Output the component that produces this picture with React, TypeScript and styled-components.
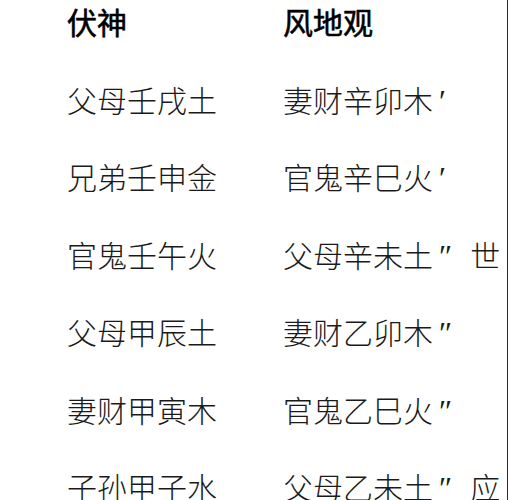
import React from "react";
import styled, { createGlobalStyle } from "styled-components";

const Global = createGlobalStyle`
  html, body { margin: 0; padding: 0; background: #fff; }
  body { font-family: "Noto Sans CJK SC", "Noto Sans", sans-serif; }
`;

const Page = styled.div`
  box-sizing: border-box;
  width: 508px;
  height: 500px;
  overflow: hidden;
  border-right: 1px solid #2a2a2a;
  padding: 6px 0 0 67px;
`;

const Table = styled.div`
  display: grid;
  grid-template-columns: 216px auto;
  grid-auto-rows: 30px;
  row-gap: 47.5px;
`;

const Cell = styled.div<{ $head?: boolean }>`
  font-size: 30px;
  line-height: 30px;
  white-space: nowrap;
  color: ${(p) => (p.$head ? "#000" : "#1a1a1a")};
  font-weight: ${(p) => (p.$head ? 400 : 300)};
  -webkit-text-stroke: ${(p) => (p.$head ? "0.6px #000" : "0")};
`;

const Mark = styled.span`
  font-family: "Liberation Serif", serif;
  font-size: 1.05em;
  margin-left: 6px;
`;

const Role = styled.span`
  margin-left: 18px;
`;

type Row = { left: string; right: string; mark: string; role?: string };

const rows: Row[] = [
  { left: "父母壬戌土", right: "妻财辛卯木", mark: "′" },
  { left: "兄弟壬申金", right: "官鬼辛巳火", mark: "′" },
  { left: "官鬼壬午火", right: "父母辛未土", mark: "″", role: "世" },
  { left: "父母甲辰土", right: "妻财乙卯木", mark: "″" },
  { left: "妻财甲寅木", right: "官鬼乙巳火", mark: "″" },
  { left: "子孙甲子水", right: "父母乙未土", mark: "″", role: "应" },
];

export default function App() {
  return (
    <>
      <Global />
      <Page>
        <Table>
          <Cell $head>伏神</Cell>
          <Cell $head>风地观</Cell>
          {rows.map((r) => (
            <React.Fragment key={r.left}>
              <Cell>{r.left}</Cell>
              <Cell>
                {r.right}
                <Mark>{r.mark}</Mark>
                {r.role && <Role>{r.role}</Role>}
              </Cell>
            </React.Fragment>
          ))}
        </Table>
      </Page>
    </>
  );
}
